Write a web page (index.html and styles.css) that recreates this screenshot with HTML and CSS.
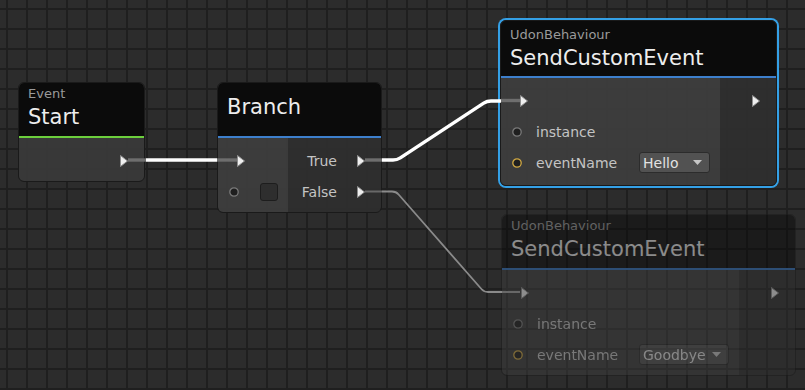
FILE: index.html
```html
<!DOCTYPE html>
<html lang="en">
<head>
    <meta charset="UTF-8">
    <title>Udon Graph</title>
    <link rel="stylesheet" href="styles.css">
</head>
<body>
    <div class="graph">

        <!-- Event: Start -->
        <div class="node node-start">
            <div class="node-title title-event">
                <div class="node-sub">Event</div>
                <div class="node-name">Start</div>
            </div>
            <div class="node-body">
                <div class="node-out plain">
                    <div class="port-row">
                        <svg class="exec" viewBox="0 0 8 12"><polygon points="0.5,0.5 7.5,6 0.5,11.5"/></svg>
                    </div>
                </div>
            </div>
        </div>

        <!-- Branch -->
        <div class="node node-branch">
            <div class="node-title solo">
                <div class="node-name">Branch</div>
            </div>
            <div class="node-body">
                <div class="node-in">
                    <div class="port-row">
                        <div class="port-slot"><svg class="exec" viewBox="0 0 8 12"><polygon points="0.5,0.5 7.5,6 0.5,11.5"/></svg></div>
                    </div>
                    <div class="port-row">
                        <div class="port-slot"><svg class="dot" viewBox="0 0 10 10"><circle cx="5" cy="5" r="4.2"/></svg></div>
                        <div class="check"></div>
                    </div>
                </div>
                <div class="node-out">
                    <div class="port-row">
                        <span class="port-label">True</span>
                        <svg class="exec" viewBox="0 0 8 12"><polygon points="0.5,0.5 7.5,6 0.5,11.5"/></svg>
                    </div>
                    <div class="port-row">
                        <span class="port-label">False</span>
                        <svg class="exec" viewBox="0 0 8 12"><polygon points="0.5,0.5 7.5,6 0.5,11.5"/></svg>
                    </div>
                </div>
            </div>
        </div>

        <!-- SendCustomEvent (selected) -->
        <div class="node node-send selected">
            <div class="node-title">
                <div class="node-sub">UdonBehaviour</div>
                <div class="node-name">SendCustomEvent</div>
            </div>
            <div class="node-body">
                <div class="node-in">
                    <div class="port-row">
                        <div class="port-slot"><svg class="exec" viewBox="0 0 8 12"><polygon points="0.5,0.5 7.5,6 0.5,11.5"/></svg></div>
                    </div>
                    <div class="port-row">
                        <div class="port-slot"><svg class="dot" viewBox="0 0 10 10"><circle cx="5" cy="5" r="4.2"/></svg></div>
                        <span class="port-label">instance</span>
                    </div>
                    <div class="port-row">
                        <div class="port-slot"><svg class="dot dot-string" viewBox="0 0 10 10"><circle cx="5" cy="5" r="4.2"/></svg></div>
                        <span class="port-label">eventName</span>
                        <div class="popup popup-hello">
                            <span class="popup-text">Hello</span>
                            <svg class="popup-arrow" viewBox="0 0 9 5"><polygon points="0,0 9,0 4.5,5"/></svg>
                        </div>
                    </div>
                </div>
                <div class="node-out">
                    <div class="port-row">
                        <svg class="exec" viewBox="0 0 8 12"><polygon points="0.5,0.5 7.5,6 0.5,11.5"/></svg>
                    </div>
                </div>
            </div>
        </div>

        <!-- SendCustomEvent (faded) -->
        <div class="node node-send-2 faded">
            <div class="node-title">
                <div class="node-sub">UdonBehaviour</div>
                <div class="node-name">SendCustomEvent</div>
            </div>
            <div class="node-body">
                <div class="node-in">
                    <div class="port-row">
                        <div class="port-slot"><svg class="exec" viewBox="0 0 8 12"><polygon points="0.5,0.5 7.5,6 0.5,11.5"/></svg></div>
                    </div>
                    <div class="port-row">
                        <div class="port-slot"><svg class="dot" viewBox="0 0 10 10"><circle cx="5" cy="5" r="4.2"/></svg></div>
                        <span class="port-label">instance</span>
                    </div>
                    <div class="port-row">
                        <div class="port-slot"><svg class="dot dot-string" viewBox="0 0 10 10"><circle cx="5" cy="5" r="4.2"/></svg></div>
                        <span class="port-label">eventName</span>
                        <div class="popup popup-bye">
                            <span class="popup-text">Goodbye</span>
                            <svg class="popup-arrow" viewBox="0 0 9 5"><polygon points="0,0 9,0 4.5,5"/></svg>
                        </div>
                    </div>
                </div>
                <div class="node-out">
                    <div class="port-row">
                        <svg class="exec" viewBox="0 0 8 12"><polygon points="0.5,0.5 7.5,6 0.5,11.5"/></svg>
                    </div>
                </div>
            </div>
        </div>

        <!-- edges -->
        <svg class="wires" viewBox="0 0 805 390">
            <path class="stub" d="M128 160 H146"/>
            <path class="flow" d="M146 160 H217"/>
            <path class="stub" d="M217 160 H237"/>

            <path class="stub" d="M365 160 H382"/>
            <path class="flow" d="M382 160 H393 Q397 160 400.3 157.8 L483.7 103.2 Q487 101 491 101 H501"/>
            <path class="stub" d="M501 100.5 H520"/>

            <path class="stub thin" d="M365 191.5 H382"/>
            <path class="edge" d="M382 191.5 H392 Q396 191.5 398.6 194.5 L481.4 289 Q484 292 488 292 H502"/>
            <path class="stub thin" d="M502 292 H520"/>
        </svg>
    </div>
</body>
</html>
```

FILE: styles.css
```css
* {
    box-sizing: border-box;
}
body {
    margin: 0;
    background: #2b2b2b;
    font-family: "DejaVu Sans", sans-serif;
}
.graph {
    position: relative;
    width: 805px;
    height: 390px;
    overflow: hidden;
    background-color: #2c2c2c;
    background-image:
        linear-gradient(to right, #1f1f1f 2px, transparent 2px),
        linear-gradient(to bottom, #1f1f1f 2px, transparent 2px);
    background-size: 20px 20px;
    background-position: 6px 8px;
}

/* nodes */
.node {
    position: absolute;
    border: 1px solid #1a1a1a;
    border-radius: 6px;
    overflow: hidden;
}
.node-start {
    left: 18px;
    top: 82px;
    width: 127px;
}
.node-branch {
    left: 217px;
    top: 82px;
    width: 165px;
}
.node-send {
    left: 500px;
    top: 20px;
    width: 277px;
}
.node-send-2 {
    left: 501px;
    top: 214px;
    width: 295px;
}
.node.selected {
    overflow: visible;
    box-shadow: 0 0 0 2px #34a0e6;
}
.node.faded {
    opacity: 0.5;
}

.node-title {
    background: #0b0b0b;
    padding: 2.5px 10px 4.5px 9px;
    border-bottom: 2px solid #3d7fcc;
    border-radius: 5px 5px 0 0;
}
.title-event {
    border-bottom-color: #6ccf3c;
}
.node-title.solo {
    padding-top: 9px;
    padding-bottom: 14px;
}
.selected .node-title {
    padding-top: 5.5px;
    padding-bottom: 3.5px;
}
.node-sub {
    font-size: 13px;
    line-height: 16px;
    color: #9a9a9a;
}
.node-name {
    font-size: 21px;
    line-height: 30px;
    color: #ededed;
}

.node-body {
    display: flex;
}
.node-in {
    flex: 1;
    background: rgba(62, 62, 62, 0.9);
    padding: 7px 10px 5px 11px;
    border-radius: 0 0 0 5px;
}
.node-out {
    width: 56px;
    background: rgba(47, 47, 47, 0.9);
    padding: 7px 16px 5px 0;
    border-radius: 0 0 5px 0;
}
.node-out.plain {
    flex: 1;
    background: rgba(58, 58, 58, 0.9);
    border-radius: 0 0 5px 5px;
}
.selected .node-in,
.selected .node-out {
    padding-bottom: 7px;
}
.node-branch .node-in {
    flex: none;
    width: 70px;
}
.node-branch .node-out {
    flex: 1;
    width: auto;
}

/* ports */
.port-row {
    height: 31px;
    display: flex;
    align-items: center;
}
.node-out .port-row {
    justify-content: flex-end;
}
.port-slot {
    width: 24px;
    flex: none;
    display: flex;
    align-items: center;
}
.exec {
    width: 8px;
    height: 12px;
    display: block;
}
.exec polygon {
    fill: #efefef;
    stroke: #8e8e8e;
    stroke-width: 1;
}
.port-slot .exec {
    margin-left: 8px;
}
.dot {
    width: 10px;
    height: 10px;
    display: block;
}
.dot circle {
    fill: #1f1f1f;
    stroke: #7a7a7a;
    stroke-width: 1.3;
}
.dot-string circle {
    stroke: #d2aa44;
}
.port-label {
    font-size: 14px;
    color: #c4c4c4;
    white-space: nowrap;
}
.node-out .port-label {
    margin-right: 20px;
}
.check {
    width: 18px;
    height: 18px;
    margin-left: 7px;
    background: #2e2e2e;
    border: 1px solid #1d1d1d;
    border-radius: 3px;
}
.popup {
    margin-left: auto;
    height: 21px;
    display: flex;
    align-items: center;
    background: #525252;
    border: 1px solid #2c2c2c;
    border-radius: 3px;
    padding: 0 7px 0 3px;
    font-size: 14px;
    color: #e2e2e2;
}
.popup-hello {
    width: 71px;
}
.popup-bye {
    width: 90px;
}
.popup-text {
    flex: 1;
}
.popup-arrow {
    width: 9px;
    height: 5px;
    fill: #c6c6c6;
}

/* edges */
.wires {
    position: absolute;
    left: 0;
    top: 0;
    width: 805px;
    height: 390px;
    pointer-events: none;
    fill: none;
}
.wires path {
    stroke-linecap: butt;
    stroke-linejoin: round;
}
.flow {
    stroke: #ffffff;
    stroke-width: 3.4;
}
.stub {
    stroke: #6e6e6e;
    stroke-width: 3.4;
}
.stub.thin {
    stroke: #686868;
    stroke-width: 2;
}
.edge {
    stroke: #8a8a8a;
    stroke-width: 1.8;
}
```
